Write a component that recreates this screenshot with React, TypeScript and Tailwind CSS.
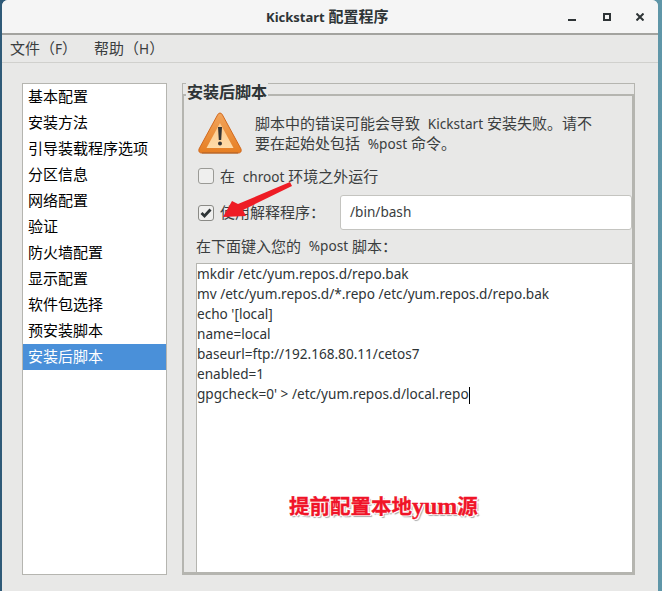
import React from 'react';

const cjk = '"Noto Sans", "Noto Sans CJK SC", sans-serif';

const sections = [
  '基本配置',
  '安装方法',
  '引导装载程序选项',
  '分区信息',
  '网络配置',
  '验证',
  '防火墙配置',
  '显示配置',
  '软件包选择',
  '预安装脚本',
  '安装后脚本',
];

const script = [
  'mkdir /etc/yum.repos.d/repo.bak',
  'mv /etc/yum.repos.d/*.repo /etc/yum.repos.d/repo.bak',
  "echo '[local]",
  'name=local',
  'baseurl=ftp://192.168.80.11/cetos7',
  'enabled=1',
];

// latin runs sit a bit smaller than the CJK text around them
const Lat: React.FC<{ children: React.ReactNode }> = ({ children }) => (
  <span className="text-[13.6px]">{children}</span>
);

const WarningIcon = () => (
  <svg width="46" height="45" viewBox="0 0 46 45" className="shrink-0">
    <defs>
      <linearGradient id="warnOuter" x1="0" y1="0" x2="0" y2="1">
        <stop offset="0" stopColor="#f2a55c" />
        <stop offset="1" stopColor="#e67e22" />
      </linearGradient>
      <linearGradient id="warnInner" x1="0" y1="0" x2="0" y2="1">
        <stop offset="0" stopColor="#fbc78a" />
        <stop offset="1" stopColor="#ffdca8" />
      </linearGradient>
    </defs>
    <path d="M23 2 Q24.500 2 25.500 4 L44 38 Q45 42 41 42 L5 42 Q1 42 2 38 L20.500 4 Q21.500 2 23 2 Z" fill="url(#warnOuter)" stroke="#d2691e" strokeWidth="1" />
    <path d="M5 42 L41 42" stroke="#a9662e" strokeWidth="1.500" opacity="0.6" />
    <path d="M23 12 L36.500 37 L9.500 37 Z" fill="url(#warnInner)" />
    <path d="M21 16 L25 16 L24.200 29 L21.800 29 Z" fill="#333333" />
    <circle cx="23" cy="32.500" r="2" fill="#333333" />
  </svg>
);

const App: React.FC = () => {
  return (
    <div
      className="relative w-[662px] h-[591px] bg-linear-to-r from-[#2f5a78] to-[#5f96a8] overflow-hidden text-[15px]"
      style={{ fontFamily: cjk }}
    >
      <div className="h-full ml-[2px] mr-[4px] bg-[#e8e8e7] rounded-t-[6px] flex flex-col">
        <div className="h-[35px] shrink-0 bg-[#f5f5f5] border-b-2 border-[#a3a39f] rounded-t-[6px] flex items-center pl-[264px] pr-[14px]">
          <span className="text-[15px] font-bold text-[#2e3436] whitespace-nowrap">
            <span className="text-[13px]">Kickstart</span> 配置程序
          </span>
          <div className="ml-auto flex items-center text-[#2e3436]">
            <svg width="8" height="8" viewBox="0 0 8 8">
              <rect x="0" y="6" width="8" height="2" fill="currentColor" />
            </svg>
            <svg width="8" height="8" viewBox="0 0 8 8" className="ml-[27px]">
              <rect x="1" y="1" width="6" height="6" fill="none" stroke="currentColor" strokeWidth="2" />
            </svg>
            <svg width="8" height="8" viewBox="0 0 8 8" className="ml-[25px]">
              <path d="M0.500 0.500 L7.500 7.500 M7.500 0.500 L0.500 7.500" stroke="currentColor" strokeWidth="2" />
            </svg>
          </div>
        </div>

        <div className="h-[28px] shrink-0 border-b border-[#d0d0cd] flex items-center pl-[8px] gap-[17px] text-[#3a3d3e]">
          <span>文件（<Lat>F</Lat>）</span>
          <span>帮助（<Lat>H</Lat>）</span>
        </div>

        <div className="flex-1 flex gap-[15px] pl-[20px] pr-[23px] pt-[20px] pb-[16px] min-h-0">
          <div className="w-[145px] shrink-0 bg-white border border-[#b5b5b0] flex flex-col">
            {sections.map((name, i) => (
              <div
                key={name}
                className={
                  i === sections.length - 1
                    ? 'h-[26px] pl-[5px] pb-[2px] flex items-center bg-[#4a90d9] text-white'
                    : 'h-[26px] pl-[5px] pb-[2px] flex items-center text-black'
                }
              >
                {name}
              </div>
            ))}
          </div>

          <div className="flex-1 flex flex-col min-w-0">
            <div className="h-[11px] shrink-0 relative border-t border-l border-r border-[#b5b5b0]">
              <span className="absolute left-[3px] top-[-2px] px-[1px] bg-[#e8e8e7] text-[16px] font-bold leading-[20px] text-[#2e3436]">
                安装后脚本
              </span>
            </div>
            <div className="flex-1 flex flex-col border-[3px] border-t-2 border-l-2 border-[#b5b5b0] min-h-0">
              <div className="flex pl-[13px] pt-[15px] h-[60px] shrink-0">
                <WarningIcon />
                <div className="ml-[12px] mt-[2px] text-[#3a3d3e] whitespace-nowrap">
                  <div className="h-[20px] leading-[20px]">脚本中的错误可能会导致&nbsp;&nbsp;<Lat>Kickstart</Lat> 安装失败。请不</div>
                  <div className="h-[20px] leading-[20px]">要在起始处包括&nbsp;&nbsp;<Lat>%post</Lat> 命令。</div>
                </div>
              </div>

              <div className="flex items-center pl-[14px] h-[28px] mt-[6px] shrink-0 text-[#3a3d3e]">
                <div className="w-[16px] h-[16px] rounded-[3px] border border-[#9a9a96] bg-[#efefee]" />
                <span className="ml-[6px] whitespace-nowrap">在&nbsp;&nbsp;<Lat>chroot</Lat> 环境之外运行</span>
              </div>

              <div className="flex items-center pl-[14px] h-[35px] mt-[5px] shrink-0 text-[#3a3d3e]">
                <div className="w-[16px] h-[16px] rounded-[3px] border border-[#8a8a86] bg-[#efefee] flex items-center justify-center">
                  <svg width="12" height="12" viewBox="0 0 12 12">
                    <path d="M1.500 6 L4.500 9 L10.500 2.500" fill="none" stroke="#2e3436" strokeWidth="2.800" />
                  </svg>
                </div>
                <span className="ml-[6px] w-[120px] shrink-0">使用解释程序：</span>
                <div className="flex-1 h-[35px] bg-white border border-[#c4c4c0] rounded-[3px] flex items-center pl-[9px] text-[13.6px]">
                  /bin/bash
                </div>
              </div>

              <div className="h-[23px] mt-[5px] pl-[12px] flex items-center shrink-0 text-[#3a3d3e] whitespace-nowrap">
                在下面键入您的&nbsp;&nbsp;<Lat>%post</Lat>&nbsp;脚本：
              </div>

              <div className="flex-1 ml-[12px] mt-[5px] border-l border-t border-[#b5b5b0] bg-white relative text-[13.6px] text-[#2e3436]">
                {script.map(line => (
                  <div key={line} className="h-[20px] leading-[20px] whitespace-nowrap">
                    {line}
                  </div>
                ))}
                <div className="h-[20px] leading-[20px] whitespace-nowrap">
                  gpgcheck=0' &gt; /etc/yum.repos.d/local.repo<span className="inline-block w-px h-[17px] bg-black align-middle" />
                </div>

                <div
                  className="absolute left-[92px] top-[230px] text-[20.500px] font-bold leading-[24px] text-[#f01428] whitespace-nowrap [-webkit-text-stroke:0.3px_#f01428] [text-shadow:1px_1px_0_#fff,-1px_-1px_0_#fff,1px_-1px_0_#fff,-1px_1px_0_#fff,2px_2px_1px_#aaa]"
                  style={{ fontFamily: '"Liberation Serif", "Noto Sans CJK SC", serif' }}
                >
                  提前配置本地<span className="text-[24px]">yum</span>源
                </div>
              </div>
            </div>
          </div>
        </div>
      </div>

      {/* red annotation arrow over the checkbox row */}
      <svg width="80" height="45" viewBox="0 0 80 45" className="absolute left-[215px] top-[175px] pointer-events-none">
        <path d="M8 42 L17 26 L23 29 L75 7 L77 11 L28 35 L31 41 Z" fill="#ee1c25" />
      </svg>
    </div>
  );
};

export default App;
